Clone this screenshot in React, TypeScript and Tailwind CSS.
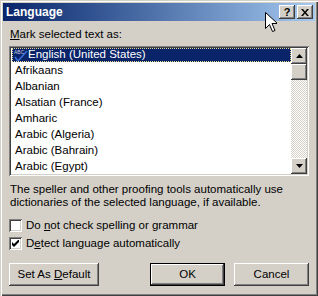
const languages = [
  "Afrikaans",
  "Albanian",
  "Alsatian (France)",
  "Amharic",
  "Arabic (Algeria)",
  "Arabic (Bahrain)",
  "Arabic (Egypt)",
];

const raised =
  "shadow-[inset_-1px_-1px_#404040,inset_1px_1px_#ffffff,inset_-2px_-2px_#808080,inset_2px_2px_#d4d0c8]";
const sunken =
  "shadow-[inset_1px_1px_#808080,inset_-1px_-1px_#ffffff,inset_2px_2px_#404040,inset_-2px_-2px_#d4d0c8]";

const ScrollArrow = ({ down }: { down?: boolean }) => (
  <div className={`w-[16px] h-[16px] bg-[#d4d0c8] flex items-center justify-center ${raised}`}>
    <svg width="7" height="4" viewBox="0 0 7 4">
      {down ? <path d="M0 0h7L3.5 4z" fill="#000" /> : <path d="M0 4h7L3.5 0z" fill="#000" />}
    </svg>
  </div>
);

const Checkbox = ({ checked }: { checked?: boolean }) => (
  <div className={`w-[13px] h-[13px] shrink-0 bg-white flex items-center justify-center ${sunken}`}>
    {checked && (
      <svg width="7" height="7" viewBox="0 0 7 7">
        <path d="M0 2v3l2 2 5-5V-1L2 4z" fill="#000" />
      </svg>
    )}
  </div>
);

const Button = ({ children, def, w }: { children: React.ReactNode; def?: boolean; w: string }) => (
  <div className={`${w} h-[23px] ${def ? "border border-black" : ""}`}>
    <div className={`w-full h-full bg-[#d4d0c8] flex items-center justify-center ${raised}`}>
      {children}
    </div>
  </div>
);

export default function App() {
  return (
    <div className="relative w-[318px] h-[296px] bg-[#d4d0c8] p-[3px] text-[11.5px] text-black font-['Liberation_Sans',Arial,sans-serif] shadow-[inset_1px_1px_#d4d0c8,inset_2px_2px_#ffffff,inset_-1px_-1px_#404040,inset_-2px_-2px_#808080]">
      {/* title bar */}
      <div className="h-[18px] flex items-center bg-gradient-to-r from-[#0a246a] to-[#a6caf0] pl-[3px] pr-[2px]">
        <span className="text-white font-bold text-[12px] leading-none">Language</span>
        <div className="ml-auto flex gap-[2px]">
          <div className={`w-[16px] h-[14px] bg-[#d4d0c8] flex items-center justify-center font-bold text-[11px] leading-none ${raised}`}>?</div>
          <div className={`w-[16px] h-[14px] bg-[#d4d0c8] flex items-center justify-center ${raised}`}>
            <svg width="8" height="7" viewBox="0 0 8 7">
              <path d="M0 0h2l2 2.5L6 0h2L5 3.5 8 7H6L4 4.5 2 7H0l3-3.5z" fill="#000" />
            </svg>
          </div>
        </div>
      </div>

      <div className="px-[6px]">
        <div className="mt-[6px] h-[14px] leading-[14px] pl-[1px]">
          <u>M</u>ark selected text as:
        </div>

        {/* list box */}
        <div className={`mt-[5px] h-[130px] bg-white p-[2px] flex ${sunken}`}>
          <div className="flex-1 overflow-hidden pl-[1px]">
            <div className="h-[14px] flex items-center bg-[#0a246a] text-white outline-1 outline-dotted outline-[#e8d890] -outline-offset-1">
              <svg width="15" height="13" viewBox="0 0 15 13" className="ml-[1px]">
                <text x="1" y="5" fontSize="5" fontFamily="Liberation Sans" fill="#c8c8e0">ABC</text>
                <path d="M2 8l3 4 9-10" stroke="#3a6fd8" strokeWidth="1.5" fill="none" />
              </svg>
              <span className="ml-0">English (United States)</span>
            </div>
            {languages.map((l) => (
              <div key={l} className="h-[16px] leading-[16px] pl-[3px]">
                {l}
              </div>
            ))}
          </div>
          <div className="w-[16px] flex flex-col">
            <ScrollArrow />
            <div className={`w-[16px] h-[16px] bg-[#d4d0c8] ${raised}`} />
            <div className="flex-1 bg-[repeating-conic-gradient(#d4d0c8_0_25%,#ffffff_0_50%)] bg-[length:2px_2px]" />
            <ScrollArrow down />
          </div>
        </div>

        <p className="mt-[7px] leading-[13px] pl-[1px]">
          The speller and other proofing tools automatically use
          <br />
          dictionaries of the selected language, if available.
        </p>

        <div className="mt-[10px] flex flex-col gap-[5px]">
          <label className="flex items-center gap-[4px] h-[13px]">
            <Checkbox />
            <span>
              Do <u>n</u>ot check spelling or grammar
            </span>
          </label>
          <label className="flex items-center gap-[4px] h-[13px]">
            <Checkbox checked />
            <span>
              D<u>e</u>tect language automatically
            </span>
          </label>
        </div>

        <div className="mt-[13px] flex">
          <Button w="w-[90px]">
            <span>
              Set As <u>D</u>efault
            </span>
          </Button>
          <div className="ml-auto flex gap-[9px]">
            <Button w="w-[75px]" def>
              OK
            </Button>
            <Button w="w-[75px]">Cancel</Button>
          </div>
        </div>
      </div>

      {/* mouse pointer */}
      <svg className="absolute left-[265px] top-[12px]" width="12" height="20" viewBox="0 0 12 20">
        <path d="M0.5 0.5v16l4-4 3 7 2.5-1-3-7h5.5z" fill="#fff" stroke="#000" strokeWidth="1" />
      </svg>
    </div>
  );
}
